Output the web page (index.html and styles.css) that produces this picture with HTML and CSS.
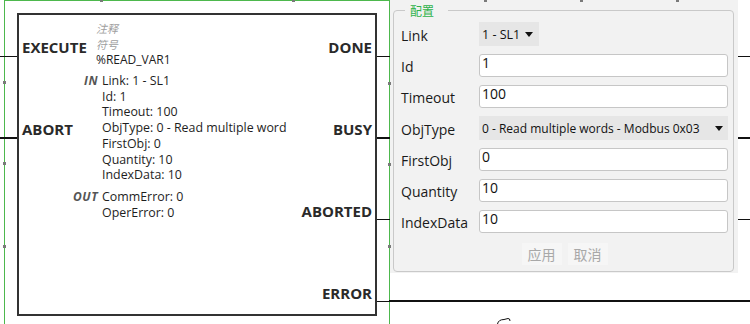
FILE: index.html
```html
<!DOCTYPE html>
<html lang="zh">
<head>
    <meta charset="UTF-8">
    <title>READ_VAR</title>
    <link rel="stylesheet" href="styles.css">
</head>
<body>
    <div class="canvas">
        <!-- рамка выделения блока -->
        <div class="sel-frame"></div>

        <!-- провода -->
        <div class="wire w-execute"></div>
        <div class="wire thick w-abort"></div>
        <div class="wire w-done"></div>
        <div class="wire thick w-busy"></div>
        <div class="wire w-aborted"></div>
        <div class="wire w-error"></div>
        <div class="wire thick w-error-out"></div>

        <!-- функциональный блок -->
        <div class="fb">
            <div class="pins pins-in">
                <div class="pin">EXECUTE</div>
                <div class="pin">ABORT</div>
            </div>
            <div class="info">
                <div class="note">注释</div>
                <div class="note">符号</div>
                <div class="inst">%READ_VAR1</div>
                <div class="params">
                    <span class="dir">IN</span>
                    <div class="vals">
                        <div>Link: 1 - SL1</div>
                        <div>Id: 1</div>
                        <div>Timeout: 100</div>
                        <div>ObjType: 0 - Read multiple word</div>
                        <div>FirstObj: 0</div>
                        <div>Quantity: 10</div>
                        <div>IndexData: 10</div>
                    </div>
                    <span class="dir">OUT</span>
                    <div class="vals">
                        <div>CommError: 0</div>
                        <div>OperError: 0</div>
                    </div>
                </div>
            </div>
            <div class="pins pins-out">
                <div class="pin">DONE</div>
                <div class="pin">BUSY</div>
                <div class="pin">ABORTED</div>
                <div class="pin">ERROR</div>
            </div>
        </div>

        <!-- панель настроек -->
        <div class="config">
            <fieldset>
                <legend>配置</legend>
                <div class="form">
                    <span class="label">Link</span>
                    <div class="select">
                        <span>1 - SL1</span>
                        <svg class="caret" width="8" height="5" viewBox="0 0 8 5"><path d="M0 0H8L4 5z"/></svg>
                    </div>

                    <span class="label">Id</span>
                    <div class="field">1</div>

                    <span class="label">Timeout</span>
                    <div class="field">100</div>

                    <span class="label">ObjType</span>
                    <div class="select wide">
                        <span>0 - Read multiple words - Modbus 0x03</span>
                        <svg class="caret" width="8" height="5" viewBox="0 0 8 5"><path d="M0 0H8L4 5z"/></svg>
                    </div>

                    <span class="label">FirstObj</span>
                    <div class="field">0</div>

                    <span class="label">Quantity</span>
                    <div class="field">10</div>

                    <span class="label">IndexData</span>
                    <div class="field">10</div>

                    <div class="actions">
                        <button>应用</button>
                        <button>取消</button>
                    </div>
                </div>
            </fieldset>
        </div>

        <!-- маркеры выделения -->
        <div class="handle h-l1"></div>
        <div class="handle h-l2"></div>
        <div class="handle h-l3"></div>
        <div class="handle h-r1"></div>
        <div class="handle h-r2"></div>
        <div class="handle h-r3"></div>
        <div class="handle top h-t1"></div>
        <div class="handle top h-t2"></div>
        <div class="handle top h-t3"></div>
        <div class="handle top h-t4"></div>
        <div class="handle top h-t5"></div>

        <svg class="cursor" width="18" height="8" viewBox="0 0 18 8">
            <path d="M1.5 8C2 5 4.5 3.5 8 3.5L12 2.5L13.5 3L14 5" fill="none" stroke="#111" stroke-width="1"/>
        </svg>
    </div>
</body>
</html>
```

FILE: styles.css
```css
body {
    margin: 0;
    background-color: #fff;
    font-family: "Open Sans", "Noto Sans CJK SC", sans-serif;
    color: #1e1e1e;
}

.canvas {
    position: relative;
    width: 750px;
    height: 324px;
    overflow: hidden;
}

.sel-frame {
    position: absolute;
    left: 4px;
    top: 0;
    width: 384px;
    height: 340px;
    border: 1px solid #4db84d;
}

.wire {
    position: absolute;
    height: 1px;
    background-color: #111;
}

.wire.thick {
    height: 2px;
}

.w-execute { left: 0; top: 56px; width: 17px; }
.w-abort { left: 0; top: 137px; width: 17px; }
.w-done { left: 377px; top: 56px; width: 373px; }
.w-busy { left: 377px; top: 137px; width: 373px; }
.w-aborted { left: 377px; top: 219px; width: 373px; }
.w-error { left: 377px; top: 301px; width: 12px; }
.w-error-out { left: 389px; top: 300px; width: 361px; }

/* функциональный блок */
.fb {
    position: absolute;
    left: 17px;
    top: 13px;
    width: 360px;
    height: 303px;
    box-sizing: border-box;
    border: 2px solid #333;
    background-color: #fff;
    display: flex;
}

.pins {
    display: flex;
    flex-direction: column;
    gap: 62px;
    padding-top: 22px;
    font-size: 15px;
    font-weight: 700;
    line-height: 20px;
    color: #2a2a2a;
    white-space: nowrap;
}

.pins-in {
    width: 58px;
    padding-left: 3px;
}

.pins-out {
    width: 72px;
    padding-right: 3px;
    align-items: flex-end;
}

.info {
    flex: 1;
    min-width: 0;
    padding-top: 5px;
    font-size: 12px;
    white-space: nowrap;
}

.note {
    padding-left: 16px;
    font-family: "Noto Sans CJK SC", sans-serif;
    font-size: 11px;
    font-style: italic;
    line-height: 16px;
    color: #a0a0a0;
}

.inst {
    padding-left: 16px;
    line-height: 16px;
}

.params {
    display: grid;
    grid-template-columns: 31px auto;
    column-gap: 4px;
    row-gap: 6px;
    margin: 5px 0 0 -13px;
    font-size: 12.4px;
    line-height: 15.7px;
}

.dir {
    text-align: right;
    font-size: 12px;
    font-weight: 700;
    font-style: italic;
    letter-spacing: 0.5px;
    color: #555;
}

/* панель настроек */
.config {
    position: absolute;
    left: 390px;
    top: 0;
    width: 348px;
    height: 273px;
    background-color: #f2f2f2;
}

.config fieldset {
    margin: 2px 4px 0 3px;
    padding: 3px 5px 6px 7px;
    border: 1px solid #c9c9c9;
    border-radius: 4px;
    min-inline-size: 0;
}

.config legend {
    margin-left: 4px;
    padding: 0 14px 0 5px;
    font-family: "Noto Sans CJK SC", sans-serif;
    font-size: 12px;
    line-height: 17px;
    color: #2fb24a;
}

.form {
    display: grid;
    grid-template-columns: 78px 249px;
    row-gap: 8px;
    align-items: center;
}

.label {
    font-size: 14px;
    line-height: 19px;
    padding-top: 2px;
    color: #1a1a1a;
}

.select {
    height: 24px;
    box-sizing: border-box;
    display: flex;
    align-items: center;
    gap: 5px;
    padding: 0 6px 0 3px;
    justify-self: start;
    background-color: #e6e6e6;
    font-size: 12.5px;
    color: #111;
}

.select.wide {
    justify-self: stretch;
    padding-right: 5px;
    font-size: 12px;
}

.select.wide .caret {
    margin-left: auto;
}

.caret path {
    fill: #111;
}

.field {
    height: 23px;
    box-sizing: border-box;
    border: 1px solid #c6c6c6;
    border-radius: 3px;
    background-color: #fff;
    padding-left: 2px;
    font-size: 14px;
    line-height: 15px;
    color: #111;
}

.actions {
    grid-column: 1 / -1;
    display: flex;
    justify-content: center;
    gap: 6px;
    margin-top: 2px;
}

.actions button {
    height: 22px;
    padding: 0 6px;
    border: none;
    background-color: #f6f6f6;
    color: #a8a8a8;
    font-family: "Noto Sans CJK SC", sans-serif;
    font-size: 14px;
}

/* маркеры выделения */
.handle {
    position: absolute;
    width: 3px;
    height: 3px;
    background-color: #7a7a7a;
}

.handle.top {
    top: 0;
    height: 2px;
}

.h-l1 { left: 3px; top: 81px; }
.h-l2 { left: 3px; top: 162px; }
.h-l3 { left: 3px; top: 245px; }
.h-r1 { left: 388px; top: 82px; }
.h-r2 { left: 388px; top: 163px; }
.h-r3 { left: 388px; top: 245px; }
.h-t1 { left: 100px; }
.h-t2 { left: 292px; }
.h-t3 { left: 484px; }
.h-t4 { left: 580px; }
.h-t5 { left: 676px; }

.cursor {
    position: absolute;
    left: 496px;
    top: 316px;
}
```
